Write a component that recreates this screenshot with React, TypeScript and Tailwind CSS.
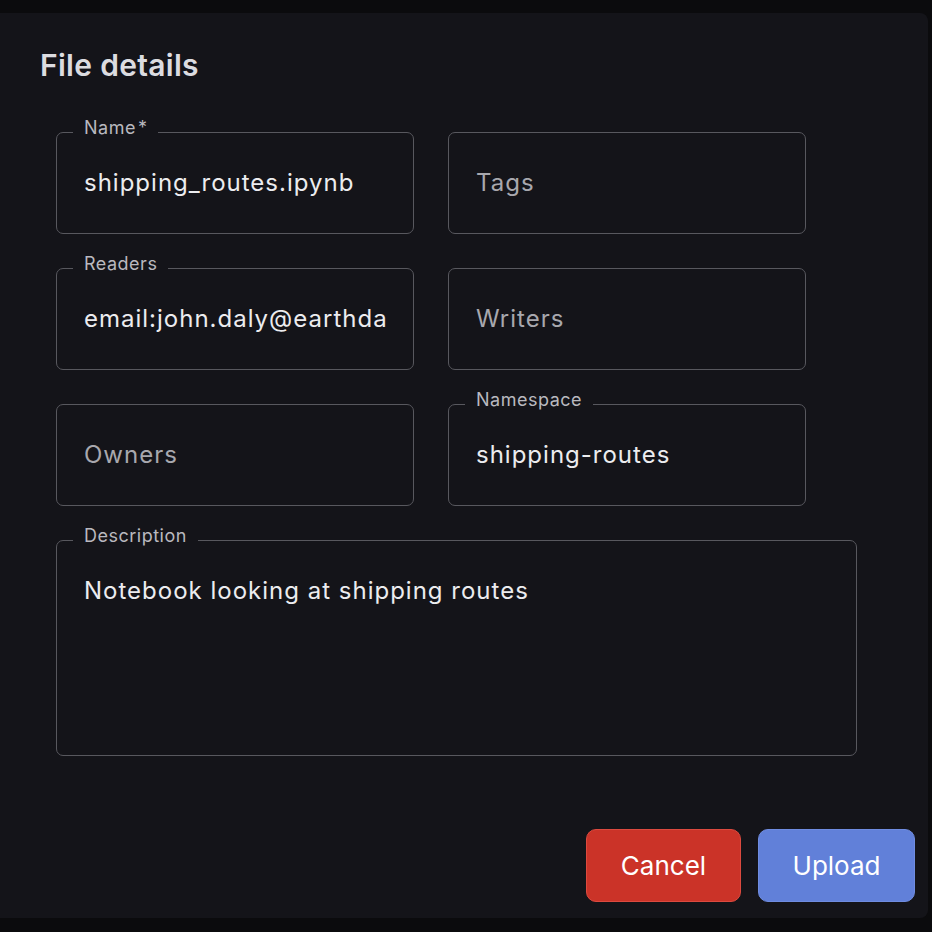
import React from 'react';

type FieldProps = {
  label?: string;
  required?: boolean;
  value?: string;
  placeholder?: string;
};

function Field({ label, required, value, placeholder }: FieldProps) {
  return (
    <div className="relative h-[102px] w-[358px] rounded-[7px] border-[1.5px] border-[#58585e]">
      {label && (
        <span className="absolute left-[16px] top-[-16px] bg-[#141419] px-[11px] text-[18px] leading-[22px] tracking-[0.5px] text-[#b9b9bf]">
          {label}
          {required && <span className="ml-[2px]">*</span>}
        </span>
      )}
      <div className="flex h-full items-center overflow-hidden whitespace-nowrap pl-[27px] pr-[27px] text-[24px] tracking-[1px]">
        {value ? (
          <span className="overflow-hidden text-[#ececef]">{value}</span>
        ) : (
          <span className="text-[#a8a8ae]">{placeholder}</span>
        )}
      </div>
    </div>
  );
}

export default function App() {
  return (
    <div
      className="h-[932px] w-[932px] bg-[#0b0b0d] pt-[13px] pr-[4px]"
      style={{ fontFamily: 'Inter, "Noto Sans", sans-serif' }}
    >
      <div className="flex h-[905px] flex-col rounded-r-[8px] bg-[#141419]">
        <h1 className="pl-[40px] pt-[34px] text-[30px] font-semibold leading-[36px] tracking-[0.3px] text-[#dcdce0]">
          File details
        </h1>

        <div className="ml-[56px] mt-[49px] grid w-[750px] grid-cols-[358px_358px] gap-x-[34px] gap-y-[34px]">
          <Field label="Name" required value="shipping_routes.ipynb" />
          <Field placeholder="Tags" />
          <Field label="Readers" value="email:john.daly@earthdaily.com" />
          <Field placeholder="Writers" />
          <Field placeholder="Owners" />
          <Field label="Namespace" value="shipping-routes" />
        </div>

        <div className="relative ml-[56px] mt-[34px] h-[216px] w-[801px] rounded-[7px] border-[1.5px] border-[#58585e]">
          <span className="absolute left-[16px] top-[-16px] bg-[#141419] px-[11px] text-[18px] leading-[22px] tracking-[0.5px] text-[#b9b9bf]">
            Description
          </span>
          <p className="pl-[27px] pt-[36px] text-[24px] leading-[28px] tracking-[1px] text-[#ececef]">
            Notebook looking at shipping routes
          </p>
        </div>

        <div className="mt-auto flex justify-end gap-[17px] pb-[16px] pr-[13px]">
          <button className="h-[73px] w-[155px] rounded-[10px] border border-[#dc4a3f] bg-[#cb3328] text-[26px] text-white">
            Cancel
          </button>
          <button className="h-[73px] w-[157px] rounded-[10px] border border-[#6f8ce0] bg-[#6180d9] text-[26px] text-white">
            Upload
          </button>
        </div>
      </div>
    </div>
  );
}
